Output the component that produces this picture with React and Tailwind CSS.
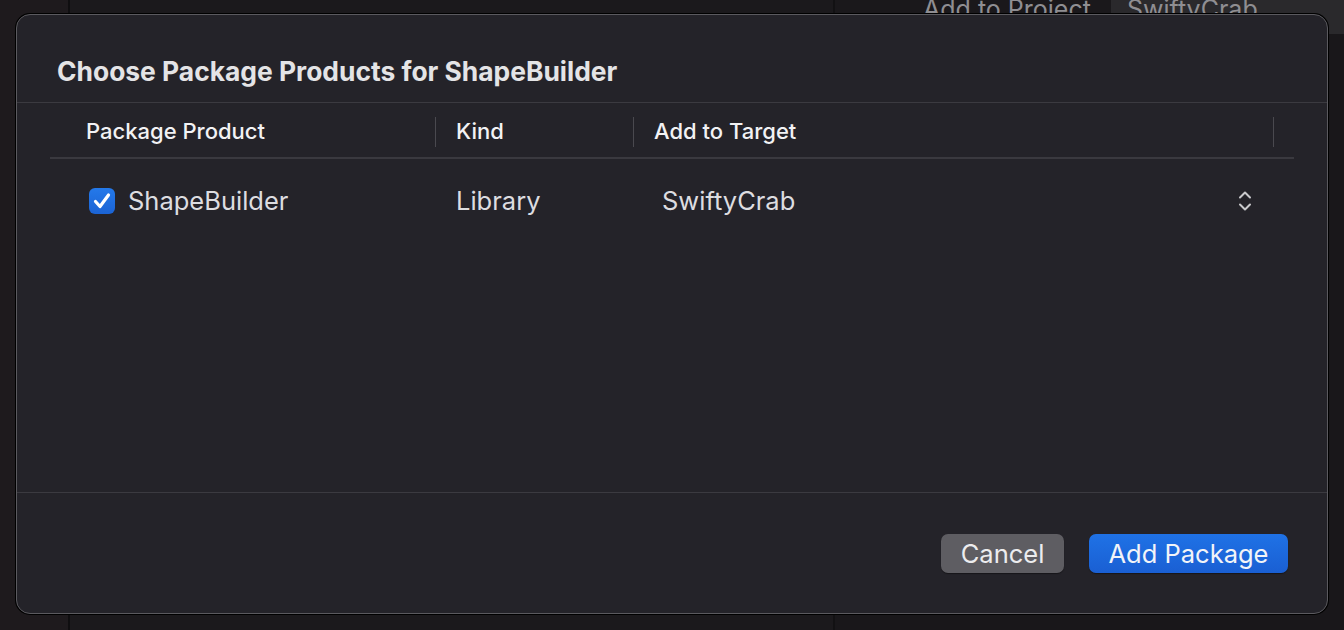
export default function App() {
  return (
    <div
      className="relative w-[1344px] h-[630px] overflow-hidden bg-[#1a181b]"
      style={{ fontFamily: 'Inter, "Noto Sans", sans-serif' }}
    >
      {/* backdrop: the Xcode window behind the sheet */}
      <div className="flex h-full">
        <div className="w-[70px] h-full bg-[#1e1a1d] border-r-2 border-[#0f0e10]" />
        <div className="w-[765px] h-full bg-[#1b191c] border-r-2 border-[#121113]" />
        <div className="flex-1 h-full flex flex-col">
          <div className="flex h-[34px] overflow-hidden">
            <div className="w-[276px] pl-[88px] text-[25px] leading-none text-[#8f8e92] -mt-[3px]">
              Add to Project
            </div>
            <div className="flex-1 bg-[#2a292c] pl-[16px] text-[25px] leading-none text-[#8f8e92] -mt-[3px]">
              SwiftyCrab
            </div>
          </div>
          <div className="flex-1 bg-[#19171a]" />
        </div>
      </div>

      {/* sheet */}
      <div className="absolute left-[16px] top-[14px] w-[1312px] h-[600px] rounded-[14px] border border-[#5b5a5f] bg-[#242329] shadow-[0_0_0_1px_#000] flex flex-col">
        <div className="h-[88px] flex items-center pl-[40px] pt-[26px] border-b border-[#3b3a40]">
          <h1 className="text-[26.4px] leading-none font-bold text-[#e4e4e6]">
            Choose Package Products for ShapeBuilder
          </h1>
        </div>

        <div className="flex-1 px-[33px]">
          <div className="flex items-center h-[56px] pt-[3px] border-b-2 border-[#3a393f] text-[22px] font-medium text-[#f2f2f4]">
            <div className="w-[385px] pl-[36px]">Package Product</div>
            <div className="w-px h-[30px] bg-[#4a494f]" />
            <div className="w-[197px] pl-[20px]">Kind</div>
            <div className="w-px h-[30px] bg-[#4a494f]" />
            <div className="w-[639px] pl-[20px]">Add to Target</div>
            <div className="w-px h-[30px] bg-[#4a494f]" />
          </div>

          <div className="flex items-center h-[84px] text-[25.5px] text-[#dddde0]">
            <div className="w-[386px] pl-[39px] flex items-center gap-[13px]">
              <Checkbox />
              <span>ShapeBuilder</span>
            </div>
            <div className="w-[198px] pl-[20px]">Library</div>
            <div className="w-[603px] pl-[28px]">SwiftyCrab</div>
            <UpDown />
          </div>
        </div>

        <div className="h-[121px] border-t border-[#3b3a40] flex items-start justify-end gap-[25px] pt-[41px] pr-[39px]">
          <button className="h-[39px] w-[123px] rounded-[7px] bg-[#5e5d62] text-[25.5px] leading-none text-[#ececee] shadow-[0_1px_1px_rgba(0,0,0,0.4)]">
            Cancel
          </button>
          <button className="h-[39px] w-[199px] rounded-[7px] bg-gradient-to-b from-[#1f72e6] to-[#1a5fd3] text-[25.5px] leading-none text-[#f2f4f8] shadow-[0_1px_1px_rgba(0,0,0,0.4)]">
            Add Package
          </button>
        </div>
      </div>
    </div>
  );
}

function Checkbox() {
  return (
    <div className="w-[26px] h-[26px] rounded-[6px] bg-gradient-to-b from-[#2479ea] to-[#1b63d4] flex items-center justify-center">
      <svg width="22" height="22" viewBox="0 0 22 22" fill="none">
        <path
          d="M4.5 11.5 L9 16.5 L17.5 5"
          stroke="#ffffff"
          strokeWidth="3.2"
          strokeLinecap="round"
          strokeLinejoin="round"
        />
      </svg>
    </div>
  );
}

function UpDown() {
  return (
    <svg width="16" height="24" viewBox="0 0 16 24" fill="none">
      <path d="M3 8.5 L8 3.5 L13 8.5" stroke="#c9c9cc" strokeWidth="2" strokeLinecap="round" strokeLinejoin="round" />
      <path d="M3 15.5 L8 20.5 L13 15.5" stroke="#c9c9cc" strokeWidth="2" strokeLinecap="round" strokeLinejoin="round" />
    </svg>
  );
}
